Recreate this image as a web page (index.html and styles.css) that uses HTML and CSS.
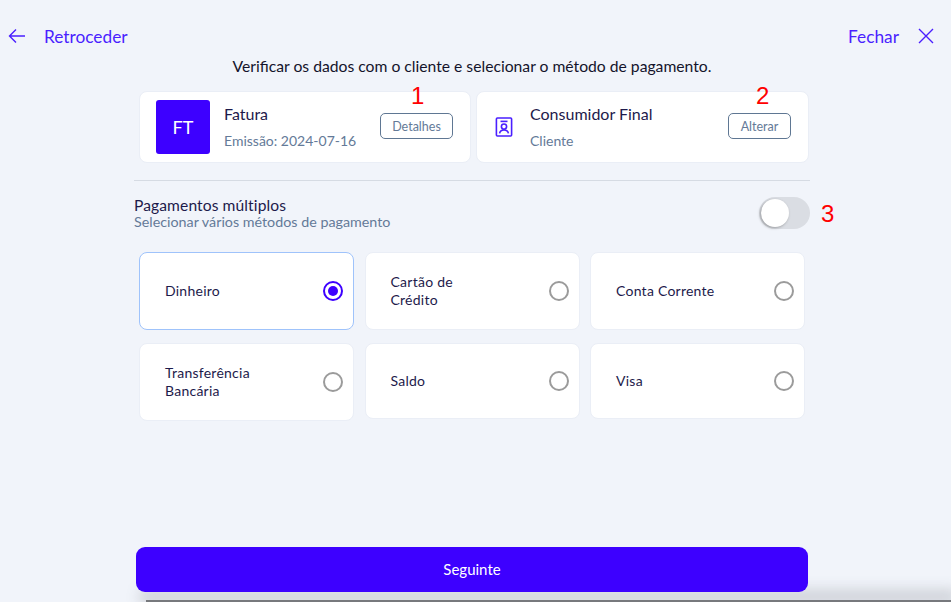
FILE: index.html
```html
<!DOCTYPE html>
<html lang="pt">
<head>
    <meta charset="UTF-8">
    <meta name="viewport" content="width=device-width, initial-scale=1.0">
    <title>Pagamento</title>
    <link rel="stylesheet" href="styles.css">
</head>
<body>
    <div class="page">
        <!-- TOP BAR -->
        <div class="top-bar">
            <a class="top-link">
                <svg class="icon-back" width="18" height="16" viewBox="0 0 18 16" fill="none" stroke="currentColor" stroke-width="1.4">
                    <path d="M17 8H1.5M8 1.5L1.5 8L8 14.5"/>
                </svg>
                <span>Retroceder</span>
            </a>
            <a class="top-link">
                <span>Fechar</span>
                <svg class="icon-close" width="16" height="16" viewBox="0 0 16 16" fill="none" stroke="currentColor" stroke-width="1.4">
                    <path d="M1 1L15 15M15 1L1 15"/>
                </svg>
            </a>
        </div>

        <div class="content">
            <p class="intro">Verificar os dados com o cliente e selecionar o método de pagamento.</p>

            <div class="info-row">
                <div class="info-card">
                    <div class="doc-badge">FT</div>
                    <div class="info-text">
                        <div class="info-title">Fatura</div>
                        <div class="info-sub">Emissão: 2024-07-16</div>
                    </div>
                    <button class="small-btn btn-details">Detalhes</button>
                    <span class="marker marker-1">1</span>
                </div>
                <div class="info-card">
                    <svg class="icon-client" width="18" height="20" viewBox="0 0 18 20" fill="none" stroke="#4a1fff" stroke-width="1.6">
                        <rect x="1.4" y="1" width="15.2" height="18" rx="1"/>
                        <path d="M5.5 4.4H12.5"/>
                        <circle cx="9" cy="9.6" r="2.6"/>
                        <path d="M4.6 16.4C5 14 6.6 13 9 13C11.4 13 13 14 13.4 16.4"/>
                    </svg>
                    <div class="info-text">
                        <div class="info-title">Consumidor Final</div>
                        <div class="info-sub">Cliente</div>
                    </div>
                    <button class="small-btn btn-change">Alterar</button>
                    <span class="marker marker-2">2</span>
                </div>
            </div>

            <div class="multi-row">
                <div class="multi-text">
                    <div class="multi-title">Pagamentos múltiplos</div>
                    <div class="multi-sub">Selecionar vários métodos de pagamento</div>
                </div>
                <div class="toggle"><div class="toggle-knob"></div></div>
                <span class="marker marker-3">3</span>
            </div>

            <div class="methods">
                <div class="method selected"><span>Dinheiro</span><i class="radio on"></i></div>
                <div class="method"><span>Cartão de<br>Crédito</span><i class="radio"></i></div>
                <div class="method"><span>Conta Corrente</span><i class="radio"></i></div>
                <div class="method"><span>Transferência<br>Bancária</span><i class="radio"></i></div>
                <div class="method short"><span>Saldo</span><i class="radio"></i></div>
                <div class="method short"><span>Visa</span><i class="radio"></i></div>
            </div>
        </div>

        <div class="footer">
            <button class="next-btn">Seguinte</button>
        </div>
        <div class="bottom-edge"></div>
    </div>
</body>
</html>
```

FILE: styles.css
```css
:root {
    --bg-color: #f1f4fa;
    --accent: #3d00ff;
    --link: #4a1fff;
    --dark-text: #1d1a4b;
    --muted-text: #647a98;
    --border: #eaeef6;
}

* { box-sizing: border-box; margin: 0; padding: 0; }

html, body { height: 100%; }

body {
    font-family: Lato, "Liberation Sans", sans-serif;
    background-color: var(--bg-color);
    color: var(--dark-text);
    overflow: hidden;
}

.page {
    position: relative;
    height: 602px;
    display: flex;
    flex-direction: column;
}

.top-bar {
    display: flex;
    justify-content: space-between;
    align-items: center;
    height: 28px;
    margin-top: 22px;
    padding: 0 17px 0 8px;
}

.top-link {
    display: flex;
    align-items: center;
    color: var(--link);
    font-size: 17.3px;
}

.icon-back { margin-right: 18px; }
.icon-close { margin-left: 19px; }

.content {
    width: 676px;
    margin-left: 134px;
}

.intro {
    margin-top: 6px;
    height: 20px;
    line-height: 20px;
    font-size: 15.7px;
    color: #14132b;
    text-align: center;
}

.info-row {
    display: flex;
    gap: 5px;
    margin: 15px 1px 0 5px;
    padding-bottom: 18px;
    position: relative;
}

.info-row::after {
    content: "";
    position: absolute;
    left: -5px;
    right: -1px;
    bottom: 0;
    height: 1px;
    background: #d6dbe3;
}

.info-card {
    position: relative;
    flex: 0 0 332px;
    height: 72px;
    display: flex;
    align-items: center;
    background: #fff;
    border: 1px solid var(--border);
    border-radius: 8px;
}

.info-card:first-child { padding: 0 17px 0 16px; }
.info-card:last-child { flex-basis: 333px; padding: 0 17px 0 18px; }

.doc-badge {
    width: 54px;
    height: 54px;
    flex-shrink: 0;
    display: flex;
    align-items: center;
    justify-content: center;
    background: var(--accent);
    border-radius: 3px;
    color: #fff;
    font-size: 18px;
}

.icon-client { flex-shrink: 0; margin-right: 17px; }

.doc-badge + .info-text { margin-left: 14px; }

.info-text { flex: 1; }

.info-title {
    font-size: 16px;
    line-height: 20px;
    color: var(--dark-text);
}

.info-sub {
    margin-top: 8px;
    font-size: 14px;
    line-height: 18px;
    color: var(--muted-text);
}

.small-btn {
    height: 26px;
    margin-bottom: 2px;
    background: #fff;
    border: 1px solid #5f7793;
    border-radius: 5px;
    color: var(--muted-text);
    font-family: inherit;
    font-size: 12.5px;
}

.btn-details { width: 73px; }
.btn-change { width: 63px; }

.marker {
    position: absolute;
    color: #ff0000;
    font-family: "Liberation Sans", sans-serif;
    font-size: 24px;
    line-height: 28px;
}

.marker-1 { left: 271px; top: -10px; }
.marker-2 { left: 279px; top: -10px; }
.marker-3 { left: 687px; top: 3px; }

.multi-row {
    position: relative;
    display: flex;
    justify-content: space-between;
    align-items: center;
    height: 32px;
    margin-top: 16px;
    width: 676px;
}

.multi-text {
    display: flex;
    flex-direction: column;
    gap: 1px;
}

.multi-title {
    font-size: 15.6px;
    line-height: 16px;
    letter-spacing: 0.1px;
    color: var(--dark-text);
}

.multi-sub {
    font-size: 14.3px;
    line-height: 16px;
    color: var(--muted-text);
}

.toggle {
    width: 51px;
    height: 32px;
    padding: 2px;
    background: #dadde3;
    border-radius: 16px;
}

.toggle-knob {
    width: 28px;
    height: 28px;
    background: #fff;
    border-radius: 50%;
    box-shadow: -1px 1px 3px rgba(0, 0, 0, 0.3);
}

.methods {
    display: grid;
    grid-template-columns: repeat(3, 215px);
    column-gap: 10.5px;
    row-gap: 13px;
    margin: 23px 0 0 5px;
}

.method {
    height: 78px;
    display: flex;
    align-items: center;
    justify-content: space-between;
    padding: 0 10px 0 25px;
    background: #fff;
    border: 1px solid var(--border);
    border-radius: 8px;
    font-size: 14px;
    line-height: 18.5px;
    letter-spacing: 0.25px;
    color: var(--dark-text);
}

.method.selected { border-color: #9fc3fb; }
.method.short { height: 76px; }

.radio {
    width: 20px;
    height: 20px;
    border: 2px solid #9b9b9b;
    border-radius: 50%;
    flex-shrink: 0;
    display: flex;
    align-items: center;
    justify-content: center;
}

.radio.on { border-color: var(--accent); }

.radio.on::before {
    content: "";
    width: 10px;
    height: 10px;
    background: var(--accent);
    border-radius: 50%;
}

.footer {
    margin: auto 0 10px 136px;
    width: 672px;
    position: relative;
    z-index: 1;
}

.next-btn {
    width: 100%;
    height: 45px;
    padding-bottom: 2px;
    background: var(--accent);
    border: none;
    border-radius: 9px;
    color: #fff;
    font-family: inherit;
    font-size: 15px;
}

.bottom-edge {
    position: absolute;
    left: 146px;
    right: 0;
    bottom: 0;
    height: 2px;
    background: #77797d;
    box-shadow: 0 -4px 14px 6px rgba(120, 122, 128, 0.3);
}
```
